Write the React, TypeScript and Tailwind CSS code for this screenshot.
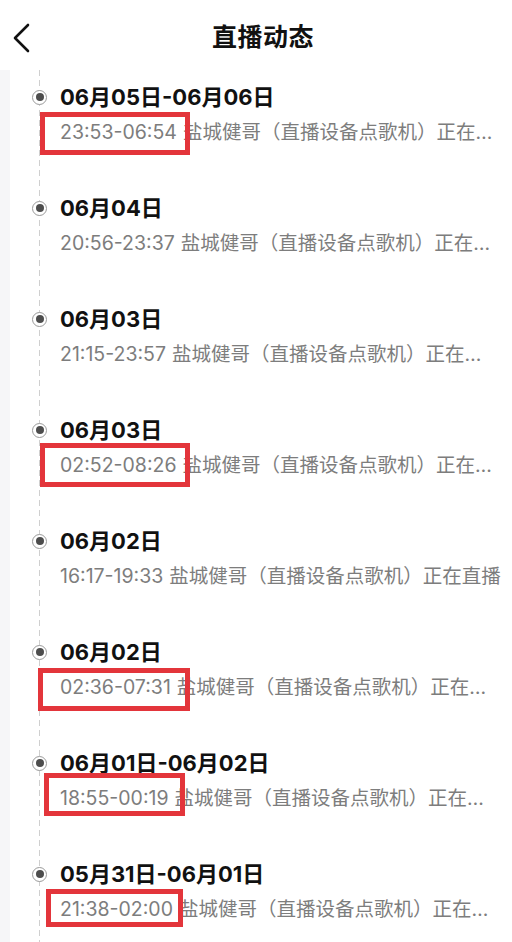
import React from "react";

type Entry = {
  date: string;
  time: string;
  rest: string;
  // red annotation box, offsets relative to the item top, x relative to page
  mark?: { top: number; left: number; w: number; h: number };
};

const cut = "盐城健哥（直播设备点歌机）正在…";

const entries: Entry[] = [
  {
    date: "06月05日-06月06日",
    time: "23:53-06:54",
    rest: cut,
    mark: { top: 30, left: 40, w: 150, h: 43 },
  },
  { date: "06月04日", time: "20:56-23:37", rest: cut },
  { date: "06月03日", time: "21:15-23:57", rest: cut },
  {
    date: "06月03日",
    time: "02:52-08:26",
    rest: cut,
    mark: { top: 28, left: 40, w: 150, h: 44 },
  },
  { date: "06月02日", time: "16:17-19:33", rest: "盐城健哥（直播设备点歌机）正在直播" },
  {
    date: "06月02日",
    time: "02:36-07:31",
    rest: cut,
    mark: { top: 31, left: 38, w: 152, h: 43 },
  },
  {
    date: "06月01日-06月02日",
    time: "18:55-00:19",
    rest: cut,
    mark: { top: 25, left: 44, w: 141, h: 43 },
  },
  {
    date: "05月31日-06月01日",
    time: "21:38-02:00",
    rest: cut,
    mark: { top: 30, left: 46, w: 137, h: 38 },
  },
];

const font = { fontFamily: 'Inter, "Noto Sans CJK SC", sans-serif' };

function Dot() {
  return (
    <span className="flex h-[15px] w-[15px] shrink-0 items-center justify-center rounded-full border-[1.5px] border-[#9a9a9a] bg-white">
      <span className="h-[8px] w-[8px] rounded-full bg-[#4d4d4d]" />
    </span>
  );
}

export default function App() {
  return (
    <div className="h-[942px] w-[512px] overflow-hidden bg-white" style={font}>
      <header className="relative flex h-[70px] items-center justify-center">
        <svg
          className="absolute left-[11px] top-[23px]"
          width="22"
          height="30"
          viewBox="0 0 22 30"
          fill="none"
        >
          <polyline
            points="17,2 4,15 17,28"
            stroke="#111"
            strokeWidth="2.6"
            strokeLinecap="round"
            strokeLinejoin="round"
          />
        </svg>
        <h1 className="pl-[14px] pt-[5px] text-[25px] font-semibold tracking-[0.5px] text-[#111]">
          直播动态
        </h1>
      </header>

      <div className="flex">
        <div className="w-[10px] shrink-0 bg-[#f6f6f8]" />
        <div className="relative flex-1 pt-[12px]">
          <div className="absolute bottom-0 left-[29px] top-0 w-px bg-[linear-gradient(to_bottom,#cfcfcf_60%,transparent_0)] bg-[length:1px_10px]" />
          {entries.map((e, i) => (
            <div key={i} className="relative h-[111px]">
              <div className="flex h-[30px] items-center pl-[22px]">
                <div className="relative z-10 flex w-[15px] justify-center">
                  <Dot />
                </div>
                <span className="ml-[13px] text-[22px] font-bold leading-[30px] text-[#111]">
                  {e.date}
                </span>
              </div>
              <p className="mt-[7px] whitespace-nowrap pl-[50px] text-[19.5px] leading-[26px] text-[#7d7d7d]">
                <span>{e.time}</span>
                <span className="ml-[6px]">{e.rest}</span>
              </p>
              {e.mark ? (
                <div
                  className="absolute border-[5px] border-[#e3353b]"
                  style={{
                    top: e.mark.top,
                    left: e.mark.left - 10,
                    width: e.mark.w,
                    height: e.mark.h,
                  }}
                />
              ) : null}
            </div>
          ))}
        </div>
      </div>
    </div>
  );
}
